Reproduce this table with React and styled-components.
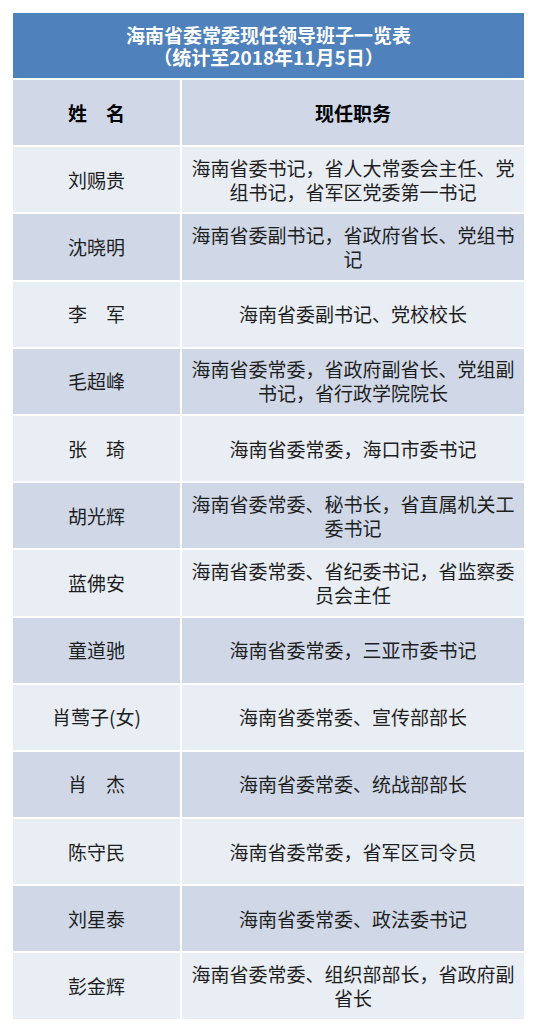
import styled, { createGlobalStyle } from 'styled-components'

const GlobalStyle = createGlobalStyle`
  html, body {
    margin: 0;
    padding: 0;
    background: #ffffff;
  }
  body {
    font-family: "Noto Sans CJK SC", "Noto Sans", sans-serif;
  }
`

const Page = styled.div`
  width: 537px;
  padding: 13px 0 0 13px;
  box-sizing: border-box;
`

const Sheet = styled.div`
  width: 511px;
  display: flex;
  flex-direction: column;
  gap: 2px;
`

const Title = styled.div`
  height: 65px;
  background-color: #4f81bd;
  color: #ffffff;
  font-size: 19px;
  font-weight: bold;
  display: flex;
  flex-direction: column;
  align-items: center;
  justify-content: center;
`

const TitleLine = styled.div`
  height: 22px;
  line-height: 22px;
  overflow: visible;
`

const Grid = styled.div`
  display: grid;
  grid-template-columns: 167px 342px;
  grid-auto-rows: 65.2px;
  gap: 2px;
`

// 행 색상: 머리행과 홀수행은 진한색, 짝수행은 연한색
const Cell = styled.div`
  background-color: ${props => (props.band === 'dark' ? '#d0d8e8' : '#e9edf4')};
  color: ${props => (props.head ? '#000000' : '#1e1e1e')};
  font-size: 19px;
  font-weight: ${props => (props.head ? 'bold' : 'normal')};
  line-height: 24px;
  text-align: center;
  display: flex;
  align-items: center;
  justify-content: center;
  padding: 0 8px;
  box-sizing: border-box;
  white-space: pre-wrap;
`

const members = [
  ['刘赐贵', '海南省委书记，省人大常委会主任、党组书记，省军区党委第一书记'],
  ['沈晓明', '海南省委副书记，省政府省长、党组书记'],
  ['李　军', '海南省委副书记、党校校长'],
  ['毛超峰', '海南省委常委，省政府副省长、党组副书记，省行政学院院长'],
  ['张　琦', '海南省委常委，海口市委书记'],
  ['胡光辉', '海南省委常委、秘书长，省直属机关工委书记'],
  ['蓝佛安', '海南省委常委、省纪委书记，省监察委员会主任'],
  ['童道驰', '海南省委常委，三亚市委书记'],
  ['肖莺子(女)', '海南省委常委、宣传部部长'],
  ['肖　杰', '海南省委常委、统战部部长'],
  ['陈守民', '海南省委常委，省军区司令员'],
  ['刘星泰', '海南省委常委、政法委书记'],
  ['彭金辉', '海南省委常委、组织部部长，省政府副省长'],
]

function App() {
  return (
    <>
      <GlobalStyle />
      <Page>
        <Sheet>
          <Title>
            <TitleLine>海南省委常委现任领导班子一览表</TitleLine>
            <TitleLine>（统计至2018年11月5日）</TitleLine>
          </Title>
          <Grid>
            <Cell band="dark" head>姓　名</Cell>
            <Cell band="dark" head>现任职务</Cell>
            {members.map(([name, post], i) => {
              const band = i % 2 === 0 ? 'light' : 'dark'
              return [
                <Cell key={name} band={band}>{name}</Cell>,
                <Cell key={name + '-post'} band={band}>{post}</Cell>,
              ]
            })}
          </Grid>
        </Sheet>
      </Page>
    </>
  )
}

export default App
